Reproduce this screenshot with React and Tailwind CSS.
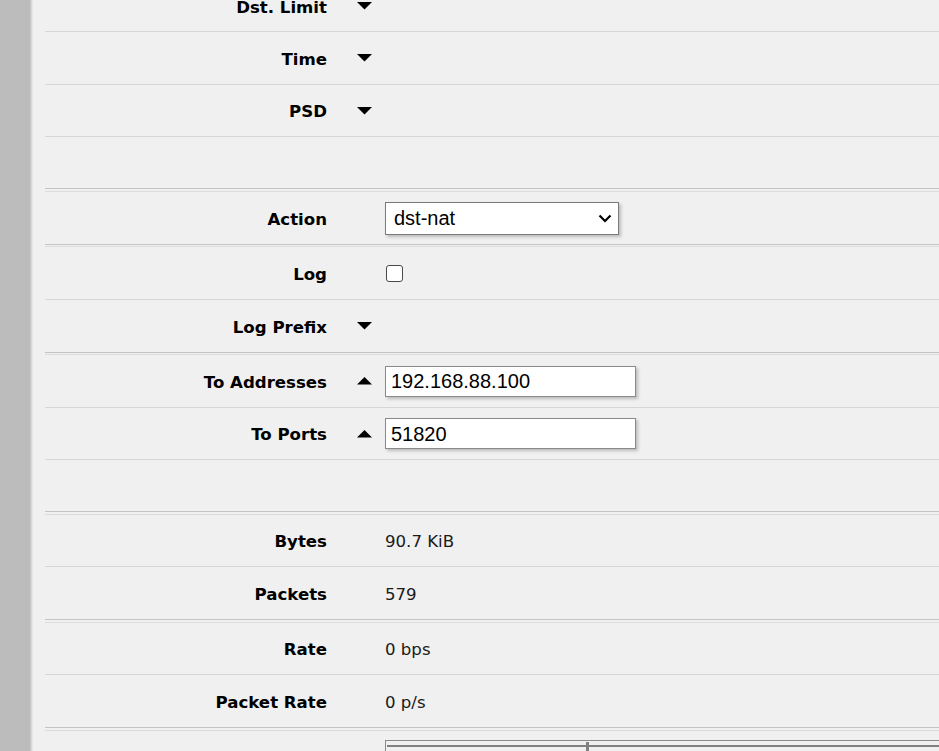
import React from "react";

const labelFont = { fontFamily: '"DejaVu Sans", Verdana, sans-serif' };

function Down() {
  return (
    <svg width="15" height="8" viewBox="0 0 15 8" className="block">
      <polygon points="0,0 15,0 7.5,7.5" fill="#000" />
    </svg>
  );
}
function Up() {
  return (
    <svg width="15" height="8" viewBox="0 0 15 8" className="block">
      <polygon points="0,7.5 15,7.5 7.5,0" fill="#000" />
    </svg>
  );
}

function Row({ label, h, arrow, children, last }) {
  return (
    <div
      className={`flex items-center ${last ? "" : "border-b border-[#d6d6d6]"}`}
      style={{ height: h }}
    >
      <div className="w-[282px] shrink-0 pt-[4px] text-right text-[16.6px] font-bold text-black" style={labelFont}>
        {label}
      </div>
      <div className="w-[58px] shrink-0 flex justify-end pr-[13px]">
        {arrow === "down" ? <Down /> : arrow === "up" ? <Up /> : null}
      </div>
      <div className="flex-1 flex items-center">{children}</div>
    </div>
  );
}

function Section({ children, first, gap = 2 }) {
  return (
    <div
      className={`border-b border-[#c3c3c3] ${first ? "" : "border-t border-t-[#dcdcdc]"}`}
      style={{ marginTop: first ? undefined : gap }}
    >
      {children}
    </div>
  );
}

function Value({ children }) {
  return (
    <span className="pt-[4px] text-[16.6px] text-[#1a1a1a]" style={labelFont}>
      {children}
    </span>
  );
}

function TextInput({ value }) {
  return (
    <div
      className="w-[251px] h-[31px] bg-white border border-[#8a8a8a] shadow-[2px_2px_3px_rgba(0,0,0,0.22)] flex items-center pl-[5px] text-[20px] text-black"
      style={{ fontFamily: '"Liberation Sans", Arial, sans-serif' }}
    >
      {value}
    </div>
  );
}

export default function App() {
  return (
    <div className="w-[939px] h-[751px] overflow-hidden flex bg-[#f0f0f0]">
      <div className="w-[30px] shrink-0 bg-[#bcbcbc]" />
      <div className="w-[1px] shrink-0 bg-[#c8c8c8]" />
      <div className="w-[1px] shrink-0 bg-[#d9d9d9]" />
      <div className="w-[1px] shrink-0 bg-[#e6e6e6]" />
      <div className="flex-1 pl-[12px] mt-[-19px]">
        <Section first>
          <Row label="Dst. Limit" h={51} arrow="down" />
          <Row label="Time" h={53} arrow="down" />
          <Row label="PSD" h={52} arrow="down" />
          <Row label="" h={51} last />
        </Section>
        <Section>
          <Row label="Action" h={52} last>
            <div
              className="w-[234px] h-[33px] bg-white border border-[#7a7a7a] shadow-[2px_2px_3px_rgba(0,0,0,0.22)] flex items-center justify-between pl-[8px] pr-[6px] text-[20px] text-black"
              style={{ fontFamily: '"Liberation Sans", Arial, sans-serif' }}
            >
              <span>dst-nat</span>
              <svg width="14" height="9" viewBox="0 0 14 9" className="block">
                <polyline points="1.5,1.5 7,7 12.5,1.5" fill="none" stroke="#000" strokeWidth="2.2" />
              </svg>
            </div>
          </Row>
        </Section>
        <Section gap={1}>
          <Row label="Log" h={53}>
            <div className="ml-[1px] w-[17px] h-[17px] rounded-[3px] border border-[#4a4a4a] bg-white" />
          </Row>
          <Row label="Log Prefix" h={52} arrow="down" last />
        </Section>
        <Section gap={1}>
          <Row label="To Addresses" h={53} arrow="up">
            <TextInput value="192.168.88.100" />
          </Row>
          <Row label="To Ports" h={52} arrow="up">
            <TextInput value="51820" />
          </Row>
          <Row label="" h={51} last />
        </Section>
        <Section>
          <Row label="Bytes" h={52}>
            <Value>90.7 KiB</Value>
          </Row>
          <Row label="Packets" h={52} last>
            <Value>579</Value>
          </Row>
        </Section>
        <Section>
          <Row label="Rate" h={52}>
            <Value>0 bps</Value>
          </Row>
          <Row label="Packet Rate" h={52} last>
            <Value>0 p/s</Value>
          </Row>
        </Section>
        <div className="mt-[2px] border-t border-[#dcdcdc] h-[40px] flex">
          <div className="w-[340px] shrink-0" />
          <div className="flex-1 mt-[9px] border-t border-l border-[#8a8a8a] relative">
            <div className="mt-[4px] ml-[1px] h-[2px] bg-[#808080]" />
            <div className="absolute left-[200px] top-[1px] w-[3px] h-[20px] bg-[#808080]" />
          </div>
        </div>
      </div>
    </div>
  );
}
